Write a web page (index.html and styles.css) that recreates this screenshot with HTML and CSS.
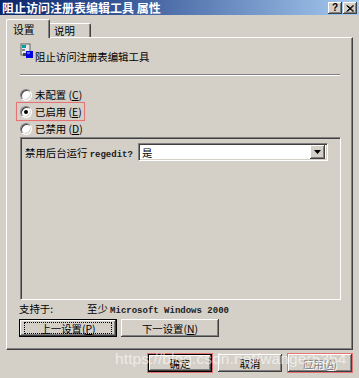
FILE: index.html
```html
<!DOCTYPE html>
<html>
<head>
<meta charset="utf-8">
<link rel="stylesheet" href="styles.css">
</head>
<body>
<div class="window">
  <div class="titlebar">
    <span class="title">阻止访问注册表编辑工具 属性</span>
    <div class="tbtns">
      <div class="tbtn"><span class="q">?</span></div>
      <div class="tbtn">
        <svg width="8" height="7" viewBox="0 0 8 7"><path d="M0.5 0.5 L7 6.5 M1.5 0.5 L8 6.5 M7 0.5 L0.5 6.5 M8 0.5 L1.5 6.5" stroke="#000" stroke-width="1"/></svg>
      </div>
    </div>
  </div>
  <div class="content">
    <div class="tabs">
      <div class="tab active">设置</div>
      <div class="tab">说明</div>
    </div>
    <div class="panel">
      <div class="heading">
        <svg class="icon" width="14" height="16" viewBox="0 0 14 16">
          <rect x="1" y="1" width="9" height="11" fill="#e8e8e8" stroke="#606060"/>
          <rect x="2" y="2" width="4" height="3" fill="#00a0a0"/>
          <rect x="2" y="6" width="3" height="2" fill="#808080"/>
          <rect x="6" y="8" width="7" height="7" fill="#0000e0"/>
          <rect x="7" y="9" width="3" height="2" fill="#6060ff"/>
          <rect x="3" y="10" width="3" height="3" fill="#404040"/>
        </svg>
        <span class="htext">阻止访问注册表编辑工具</span>
      </div>
      <div class="sep"></div>
      <div class="radios">
        <div class="radio-row"><span class="radio"></span><span>未配置 (<u>C</u>)</span></div>
        <div class="radio-row"><span class="radio on"></span><span class="hl">已启用 (<u>E</u>)</span></div>
        <div class="radio-row"><span class="radio"></span><span>已禁用 (<u>D</u>)</span></div>
      </div>
      <div class="group">
        <div class="opt-row">
          <span class="opt-label">禁用后台运行 <span class="mono">regedit?</span></span>
          <div class="combo">
            <span class="combo-val">是</span>
            <div class="combo-btn">
              <svg width="7" height="4" viewBox="0 0 7 4"><path d="M0 0 H7 L3.5 4 Z" fill="#000"/></svg>
            </div>
          </div>
        </div>
      </div>
      <div class="support">
        <span class="sup-label">支持于:</span>
        <span>至少 <span class="mono">Microsoft Windows 2000</span></span>
      </div>
      <div class="nav">
        <div class="btn focus"><span class="focus-ring">上一设置(<u>P</u>)</span></div>
        <div class="btn">下一设置(<u>N</u>)</div>
      </div>
    </div>
    <div class="footer">
      <div class="btn default marked">确定</div>
      <div class="btn">取消</div>
      <div class="btn disabled marked">应用(<u>A</u>)</div>
    </div>
  </div>
  <div class="watermark">https://blog.csdn.net/wanger5354</div>
</div>
</body>
</html>
```

FILE: styles.css
```css
* { box-sizing: border-box; }
html, body {
  margin: 0;
  padding: 0;
  background: #d4d0c8;
}
.window {
  position: relative;
  width: 359px;
  height: 378px;
  overflow: hidden;
  background: #d4d0c8;
  font-family: "Noto Sans CJK SC", "Liberation Sans", sans-serif;
  font-size: 10.4px;
  color: #000;
}
.titlebar {
  height: 15px;
  display: flex;
  align-items: center;
  padding: 0 2px 0 2px;
  background: linear-gradient(to right, #0a246a 0%, #3a5a9a 35%, #a6caf0 100%);
}
.title {
  color: #fff;
  font-weight: bold;
  font-size: 12px;
  line-height: 14px;
  white-space: nowrap;
}
.tbtns {
  margin-left: auto;
  display: flex;
  gap: 1px;
  padding-top: 1px;
}
.tbtn {
  width: 14px;
  height: 12px;
  background: #d4d0c8;
  box-shadow: inset -1px -1px #404040, inset 1px 1px #fff, inset -2px -2px #808080;
  display: flex;
  align-items: center;
  justify-content: center;
}
.tbtn .q {
  font-family: "Liberation Sans", sans-serif;
  font-weight: bold;
  font-size: 10px;
  line-height: 10px;
}
.content {
  padding: 4px 6px 0 6px;
}
.tabs {
  display: flex;
  align-items: flex-end;
  height: 18px;
  position: relative;
  z-index: 1;
}
.tab {
  height: 14px;
  width: 41px;
  border-top: 1px solid #fff;
  border-right: 1px solid #404040;
  box-shadow: inset -1px 0 #808080;
  border-top-right-radius: 2px;
  padding-left: 4px;
  line-height: 13px;
}
.tab.active {
  height: 19px;
  width: 44px;
  border-left: 1px solid #fff;
  border-top-left-radius: 2px;
  margin-bottom: -1px;
  background: #d4d0c8;
  padding-left: 6px;
  line-height: 18px;
  font-size: 10.8px;
}
.panel {
  width: 347px;
  height: 313px;
  border-top: 1px solid #fff;
  border-left: 1px solid #fff;
  border-right: 1px solid #404040;
  border-bottom: 1px solid #404040;
  box-shadow: inset -1px -1px #808080;
  padding-left: 13px;
  display: flex;
  flex-direction: column;
}
.heading {
  margin-top: 5px;
  height: 20px;
  display: flex;
  align-items: flex-start;
  gap: 1px;
}
.icon { flex: none; }
.htext {
  margin-top: 7px;
  line-height: 13px;
}
.sep {
  margin-top: 11px;
  width: 320px;
  height: 2px;
  border-top: 1px solid #808080;
  border-bottom: 1px solid #fff;
}
.radios {
  margin-top: 10px;
  display: flex;
  flex-direction: column;
}
.radio-row {
  height: 17px;
  display: flex;
  align-items: center;
  gap: 3px;
}
.radio {
  width: 12px;
  height: 12px;
  border-radius: 50%;
  background: #fff;
  border: 1px solid;
  border-color: #808080 #fff #fff #808080;
  box-shadow: inset 1px 1px #404040, inset -1px -1px #d4d0c8;
  display: flex;
  align-items: center;
  justify-content: center;
  flex: none;
}
.radio.on::after {
  content: "";
  width: 4px;
  height: 4px;
  border-radius: 50%;
  background: #000;
}
.hl {
  position: relative;
}
.hl::before {
  content: "";
  position: absolute;
  left: -19px;
  right: -3px;
  top: -2px;
  bottom: -2px;
  border: 1px solid #e57373;
  box-shadow: 0 0 1px #f0a0a0;
}
.group {
  width: 321px;
  height: 163px;
  border-top: 1px solid #808080;
  border-left: 1px solid #808080;
  border-right: 1px solid #fff;
  border-bottom: 1px solid #fff;
  box-shadow: inset 1px 1px #404040;
  padding: 5px 0 0 4px;
}
.opt-row {
  display: flex;
  align-items: center;
  gap: 3px;
}
.mono {
  font-family: "Liberation Mono", monospace;
  font-size: 9px;
  font-weight: bold;
  color: #202020;
}
.combo {
  width: 190px;
  height: 18px;
  background: #fff;
  border-top: 1px solid #808080;
  border-left: 1px solid #808080;
  border-right: 1px solid #fff;
  border-bottom: 1px solid #fff;
  box-shadow: inset 1px 1px #404040, inset -1px -1px #d4d0c8;
  display: flex;
  align-items: center;
  padding: 0 2px 0 3px;
  margin-left: 2px;
}
.combo-val { flex: 1; }
.combo-btn {
  width: 15px;
  height: 14px;
  background: #d4d0c8;
  box-shadow: inset -1px -1px #404040, inset 1px 1px #fff, inset -2px -2px #808080;
  display: flex;
  align-items: center;
  justify-content: center;
}
.support {
  margin-top: 2px;
  height: 13px;
  line-height: 13px;
  display: flex;
  margin-left: -1px;
}
.sup-label {
  width: 68px;
}
.nav {
  margin-top: 4px;
  display: flex;
  gap: 4px;
  margin-left: -1px;
}
.btn {
  width: 98px;
  height: 18px;
  background: #d4d0c8;
  box-shadow: inset -1px -1px #404040, inset 1px 1px #fff, inset -2px -2px #808080;
  display: flex;
  align-items: center;
  justify-content: center;
  line-height: 13px;
}
.btn.focus, .btn.default {
  border: 1px solid #000;
}
.focus-ring {
  width: 88px;
  height: 12px;
  border: 1px dotted #000;
  display: flex;
  align-items: center;
  justify-content: center;
}
.footer {
  margin-top: 4px;
  display: flex;
  justify-content: flex-end;
  gap: 6px;
  padding-right: 1px;
}
.footer .btn {
  width: 64px;
}
.btn.marked {
  outline: 1px solid #e57373;
  outline-offset: 0px;
}
.btn.disabled {
  color: #808080;
  text-shadow: 1px 1px #fff;
}
.watermark {
  position: absolute;
  left: 115px;
  top: 350px;
  font-family: "Liberation Sans", sans-serif;
  font-size: 15.5px;
  color: rgba(255, 255, 255, 0.6);
  white-space: nowrap;
  letter-spacing: 0.1px;
}
```
